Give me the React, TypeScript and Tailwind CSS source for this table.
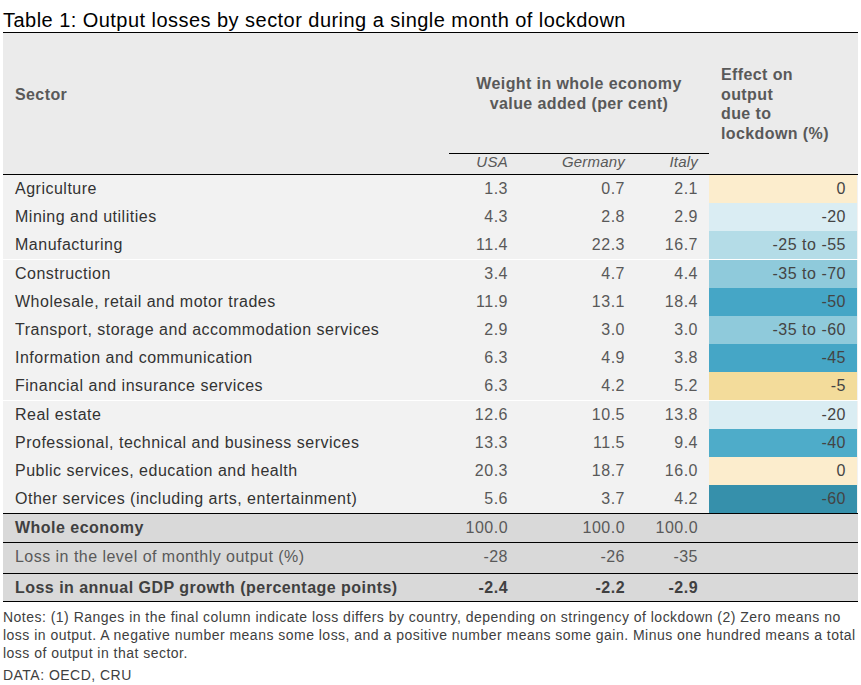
const rows = [
  { sector: "Agriculture", usa: "1.3", de: "0.7", it: "2.1", effect: "0", bg: "bg-[#fcedcd]" },
  { sector: "Mining and utilities", usa: "4.3", de: "2.8", it: "2.9", effect: "-20", bg: "bg-[#daedf3]" },
  { sector: "Manufacturing", usa: "11.4", de: "22.3", it: "16.7", effect: "-25 to -55", bg: "bg-[#b4dce7]", sep: true },
  { sector: "Construction", usa: "3.4", de: "4.7", it: "4.4", effect: "-35 to -70", bg: "bg-[#8fcadb]" },
  { sector: "Wholesale, retail and motor trades", usa: "11.9", de: "13.1", it: "18.4", effect: "-50", bg: "bg-[#45a6c6]" },
  { sector: "Transport, storage and accommodation services", usa: "2.9", de: "3.0", it: "3.0", effect: "-35 to -60", bg: "bg-[#8fcadb]" },
  { sector: "Information and communication", usa: "6.3", de: "4.9", it: "3.8", effect: "-45", bg: "bg-[#45a6c6]" },
  { sector: "Financial and insurance services", usa: "6.3", de: "4.2", it: "5.2", effect: "-5", bg: "bg-[#f3dc9b]", sep: true },
  { sector: "Real estate", usa: "12.6", de: "10.5", it: "13.8", effect: "-20", bg: "bg-[#daedf3]" },
  { sector: "Professional, technical and business services", usa: "13.3", de: "11.5", it: "9.4", effect: "-40", bg: "bg-[#4eacc9]" },
  { sector: "Public services, education and health", usa: "20.3", de: "18.7", it: "16.0", effect: "0", bg: "bg-[#fcedcd]" },
  { sector: "Other services (including arts, entertainment)", usa: "5.6", de: "3.7", it: "4.2", effect: "-60", bg: "bg-[#3690ab]" },
];

const cols = "grid grid-cols-[446px_69px_117px_74px_148px]";

export default function App() {
  return (
    <div className="w-[861px] h-[685px] bg-white font-['Liberation_Sans',Arial,sans-serif] overflow-hidden">
      <div className="mx-[3px] w-[855px]">
        {/* title */}
        <div className="pt-[9px] text-[20px] leading-[23px] tracking-[0.46px] text-black border-b border-black whitespace-nowrap">
          Table 1: Output losses by sector during a single month of lockdown
        </div>

        {/* header */}
        <div className={`${cols} grid-rows-[121px_20px] bg-[#ebebeb] border-b border-black text-[16px] tracking-[0.4px] font-bold text-[#595959]`}>
          <div className="col-start-1 row-start-1 flex items-center pl-3 pt-[2px]">Sector</div>
          <div className="col-start-2 col-span-3 row-start-1 flex items-center justify-center text-center leading-[20px] border-b border-black pt-[2px]">
            <span>
              Weight in whole economy
              <br />
              value added (per cent)
            </span>
          </div>
          <div className="col-start-5 row-start-1 row-span-2 flex items-center pl-3 leading-[19.5px] pt-[1px] whitespace-nowrap">
            <span>
              Effect on
              <br />
              output
              <br />
              due to
              <br />
              lockdown (%)
            </span>
          </div>
          <div className="col-start-2 row-start-2 text-right pr-[10px] italic font-normal text-[15px] tracking-[0.3px] leading-[15px]">USA</div>
          <div className="col-start-3 row-start-2 text-right pr-[10px] italic font-normal text-[15px] tracking-[0.2px] leading-[15px]">Germany</div>
          <div className="col-start-4 row-start-2 text-right pr-[11px] italic font-normal text-[15px] tracking-[0.2px] leading-[15px]">Italy</div>
        </div>

        {/* body */}
        <div className="bg-[#f2f2f2] border-b border-black text-[16px] tracking-[0.5px] leading-[28px]">
          {rows.map((r) => (
            <div key={r.sector} className={`${cols} ${r.sep ? "border-b border-white" : ""}`}>
              <div className="pl-3 text-[#333333] whitespace-nowrap">{r.sector}</div>
              <div className="text-right pr-[10px] text-[#595959]">{r.usa}</div>
              <div className="text-right pr-[10px] text-[#595959]">{r.de}</div>
              <div className="text-right pr-[11px] text-[#595959]">{r.it}</div>
              <div className={`text-right pr-[11px] text-[#444444] whitespace-nowrap ${r.bg}`}>{r.effect}</div>
            </div>
          ))}
        </div>

        {/* totals */}
        <div className="bg-[#d9d9d9] text-[16px] tracking-[0.47px]">
          <div className={`${cols} h-[29px] leading-[28px] border-b border-black`}>
            <div className="pl-3 font-bold text-[#404040]">Whole economy</div>
            <div className="text-right pr-[10px] text-[#595959]">100.0</div>
            <div className="text-right pr-[10px] text-[#595959]">100.0</div>
            <div className="text-right pr-[11px] text-[#595959]">100.0</div>
            <div />
          </div>
          <div className={`${cols} h-[31px] leading-[28px] border-b border-black`}>
            <div className="pl-3 text-[#595959] whitespace-nowrap">Loss in the level of monthly output (%)</div>
            <div className="text-right pr-[10px] text-[#595959]">-28</div>
            <div className="text-right pr-[10px] text-[#595959]">-26</div>
            <div className="text-right pr-[11px] text-[#595959]">-35</div>
            <div />
          </div>
          <div className={`${cols} h-[28px] leading-[27px] border-b border-black font-bold text-[#404040]`}>
            <div className="pl-3 whitespace-nowrap">Loss in annual GDP growth (percentage points)</div>
            <div className="text-right pr-[10px]">-2.4</div>
            <div className="text-right pr-[10px]">-2.2</div>
            <div className="text-right pr-[11px]">-2.9</div>
            <div />
          </div>
        </div>

        {/* notes */}
        <div className="mt-[6px] text-[14px] leading-[18px] tracking-[0.48px] text-[#404040] whitespace-nowrap">
          Notes: (1) Ranges in the final column indicate loss differs by country, depending on stringency of lockdown (2) Zero means no
          <br />
          loss in output. A negative number means some loss, and a positive number means some gain. Minus one hundred means a total
          <br />
          loss of output in that sector.
        </div>
        <div className="mt-[5px] text-[14px] leading-[17.5px] tracking-[0.48px] text-[#404040]">DATA: OECD, CRU</div>
      </div>
    </div>
  );
}
